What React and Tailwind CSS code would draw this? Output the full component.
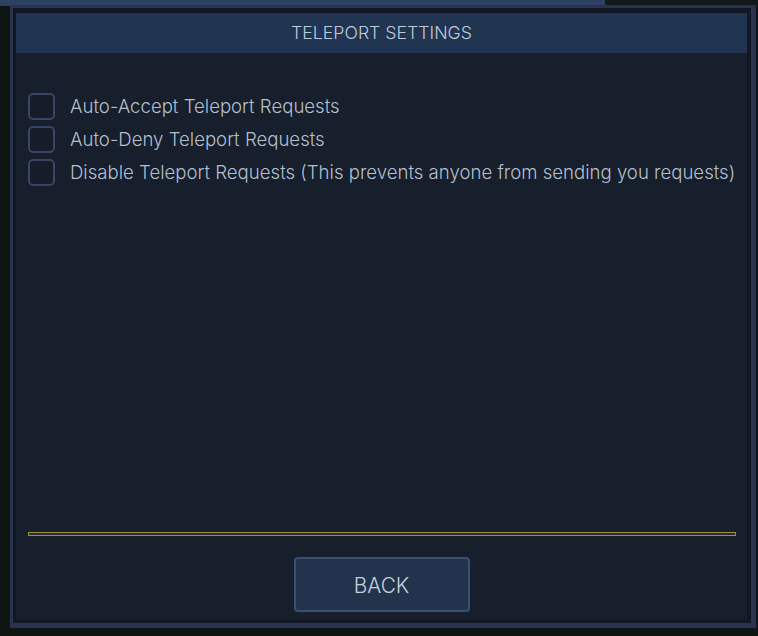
import { useState } from 'react'

const options = [
  'Auto-Accept Teleport Requests',
  'Auto-Deny Teleport Requests',
  'Disable Teleport Requests (This prevents anyone from sending you requests)',
]

function Checkbox({ checked, onChange }) {
  return (
    <button
      type="button"
      onClick={onChange}
      className="flex h-[27px] w-[27px] shrink-0 items-center justify-center rounded-[5px] border-2 border-[#3a4463] bg-[#171c2b]"
    >
      {checked && (
        <svg width="16" height="16" viewBox="0 0 16 16" fill="none">
          <path d="M3 8.5l3.2 3.2L13 4.5" stroke="#b4bfcd" strokeWidth="2.2" strokeLinecap="round" strokeLinejoin="round" />
        </svg>
      )}
    </button>
  )
}

export default function App() {
  const [checked, setChecked] = useState([false, false, false])

  const toggle = (i) => {
    setChecked((c) => c.map((v, j) => (j === i ? !v : v)))
  }

  return (
    <div
      className="h-[636px] w-[758px] overflow-hidden bg-[#0f1512] bg-[image:linear-gradient(to_right,#2d4163_605px,#121a18_605px)] bg-[length:100%_6px] bg-no-repeat pt-[5px] pl-[10px]"
      style={{ fontFamily: 'Inter, "Noto Sans", sans-serif' }}
    >
      <div className="h-[623px] w-[746px] border-[3px] border-r-[5px] border-b-[5px] border-[#2a3250] bg-[#121823] pt-[5px] pl-[3px] pr-[4px] pb-[3px]">
        <div className="flex h-full flex-col bg-[#161f2b]">
          <div className="flex h-[40px] items-center justify-center bg-[#213552] pt-[1px] text-[17.7px] font-[350] text-[#bccbd8]">
            TELEPORT SETTINGS
          </div>

          <div className="flex flex-1 flex-col gap-[6px] px-[12px] pt-[40px]">
            {options.map((label, i) => (
              <label key={label} className="flex h-[27px] cursor-pointer items-center gap-[15px]">
                <Checkbox checked={checked[i]} onChange={() => toggle(i)} />
                <span className="whitespace-nowrap text-[18.6px] font-[350] text-[#b4bfce]">{label}</span>
              </label>
            ))}
          </div>

          <div className="ml-[12px] mr-[11px] h-[4px] border border-[#a08b3e] bg-[#2b2d2a]" />

          <div className="flex justify-center pt-[21px] pb-[8px]">
            <button
              type="button"
              className="h-[55px] w-[176px] rounded-[4px] border-2 border-[#3a5072] bg-[#22344d] pt-[2px] text-[20.8px] font-[350] text-[#c5d2dc]"
            >
              BACK
            </button>
          </div>
        </div>
      </div>
    </div>
  )
}
